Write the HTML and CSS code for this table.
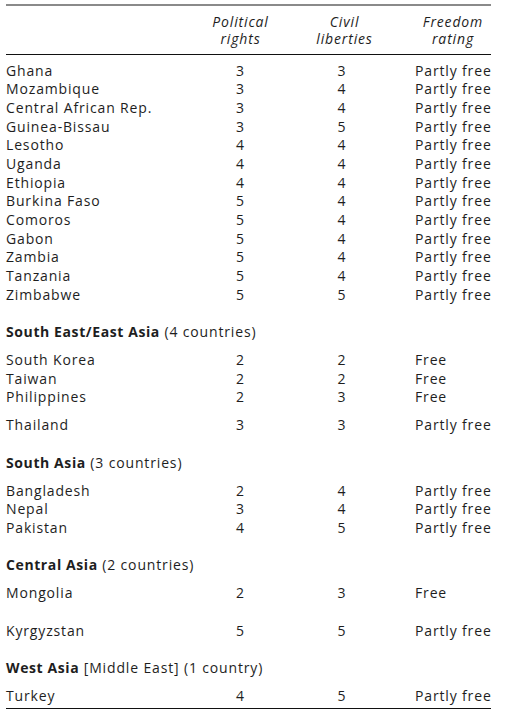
FILE: index.html
```html
<!DOCTYPE html>
<html>
<head>
<meta charset="utf-8">
<link rel="stylesheet" href="styles.css">
</head>
<body>
<div class="page">
<table class="ft">
<colgroup>
<col class="c-name"><col class="c-pr"><col class="c-cl"><col class="c-fr">
</colgroup>
<thead>
<tr>
<th class="h-name"></th>
<th class="h-num">Political<br>rights</th>
<th class="h-num h-civil">Civil<br>liberties</th>
<th class="h-rate">Freedom<br>rating</th>
</tr>
</thead>
<tbody>
<tr class="first"><td>Ghana</td><td class="n">3</td><td class="n">3</td><td class="r">Partly free</td></tr>
<tr><td>Mozambique</td><td class="n">3</td><td class="n">4</td><td class="r">Partly free</td></tr>
<tr><td>Central African Rep.</td><td class="n">3</td><td class="n">4</td><td class="r">Partly free</td></tr>
<tr><td>Guinea-Bissau</td><td class="n">3</td><td class="n">5</td><td class="r">Partly free</td></tr>
<tr><td>Lesotho</td><td class="n">4</td><td class="n">4</td><td class="r">Partly free</td></tr>
<tr><td>Uganda</td><td class="n">4</td><td class="n">4</td><td class="r">Partly free</td></tr>
<tr><td>Ethiopia</td><td class="n">4</td><td class="n">4</td><td class="r">Partly free</td></tr>
<tr><td>Burkina Faso</td><td class="n">5</td><td class="n">4</td><td class="r">Partly free</td></tr>
<tr><td>Comoros</td><td class="n">5</td><td class="n">4</td><td class="r">Partly free</td></tr>
<tr><td>Gabon</td><td class="n">5</td><td class="n">4</td><td class="r">Partly free</td></tr>
<tr><td>Zambia</td><td class="n">5</td><td class="n">4</td><td class="r">Partly free</td></tr>
<tr><td>Tanzania</td><td class="n">5</td><td class="n">4</td><td class="r">Partly free</td></tr>
<tr><td>Zimbabwe</td><td class="n">5</td><td class="n">5</td><td class="r">Partly free</td></tr>

<tr class="region"><td colspan="4"><b>South East/East Asia</b> (4 countries)</td></tr>
<tr><td>South Korea</td><td class="n">2</td><td class="n">2</td><td class="r">Free</td></tr>
<tr><td>Taiwan</td><td class="n">2</td><td class="n">2</td><td class="r">Free</td></tr>
<tr><td>Philippines</td><td class="n">2</td><td class="n">3</td><td class="r">Free</td></tr>
<tr class="half"><td>Thailand</td><td class="n">3</td><td class="n">3</td><td class="r">Partly free</td></tr>

<tr class="region"><td colspan="4"><b>South Asia</b> (3 countries)</td></tr>
<tr><td>Bangladesh</td><td class="n">2</td><td class="n">4</td><td class="r">Partly free</td></tr>
<tr><td>Nepal</td><td class="n">3</td><td class="n">4</td><td class="r">Partly free</td></tr>
<tr><td>Pakistan</td><td class="n">4</td><td class="n">5</td><td class="r">Partly free</td></tr>

<tr class="region"><td colspan="4"><b>Central Asia</b> (2 countries)</td></tr>
<tr><td>Mongolia</td><td class="n">2</td><td class="n">3</td><td class="r">Free</td></tr>
<tr class="full"><td>Kyrgyzstan</td><td class="n">5</td><td class="n">5</td><td class="r">Partly free</td></tr>

<tr class="region"><td colspan="4"><b>West Asia</b> [Middle East] (1 country)</td></tr>
<tr class="last"><td>Turkey</td><td class="n">4</td><td class="n">5</td><td class="r">Partly free</td></tr>
</tbody>
</table>
</div>
</body>
</html>
```

FILE: styles.css
```css
html, body {
  margin: 0;
  padding: 0;
  background: #ffffff;
}

.page {
  padding: 4px 0 0 6px;
}

.ft {
  width: 485px;
  table-layout: fixed;
  border-collapse: collapse;
  border-spacing: 0;
  font-family: "Open Sans", "Noto Sans", sans-serif;
  font-size: 14px;
  letter-spacing: 0.85px;
  color: #1e1e1e;
}

.c-name { width: 184px; }
.c-pr { width: 101px; }
.c-cl { width: 102px; }
.c-fr { width: 98px; }

.ft th,
.ft td {
  padding: 0;
  vertical-align: top;
  white-space: nowrap;
}

.ft thead th {
  border-top: 2px solid #8a8a8a;
  border-bottom: 1px solid #111;
  padding: 6.5px 0 6.5px 0;
  font-weight: normal;
  font-style: italic;
  line-height: 17.5px;
  text-align: center;
}

.ft thead .h-civil {
  padding-left: 5px;
}

.ft thead .h-rate {
  padding-left: 22px;
}

.ft td {
  line-height: 18.67px;
}

.ft td.n {
  text-align: center;
}

.ft td.r {
  padding-left: 22px;
}

.ft tr.first td {
  padding-top: 6.5px;
}

.ft tr.region td {
  padding-top: 18.67px;
  padding-bottom: 9.33px;
}

.ft tr.region b {
  font-weight: bold;
  letter-spacing: 0.6px;
}

.ft tr.half td {
  padding-top: 9.33px;
}

.ft tr.full td {
  padding-top: 18.67px;
}

.ft tr.last td {
  border-bottom: 1px solid #111;
  padding-bottom: 2px;
}
```
